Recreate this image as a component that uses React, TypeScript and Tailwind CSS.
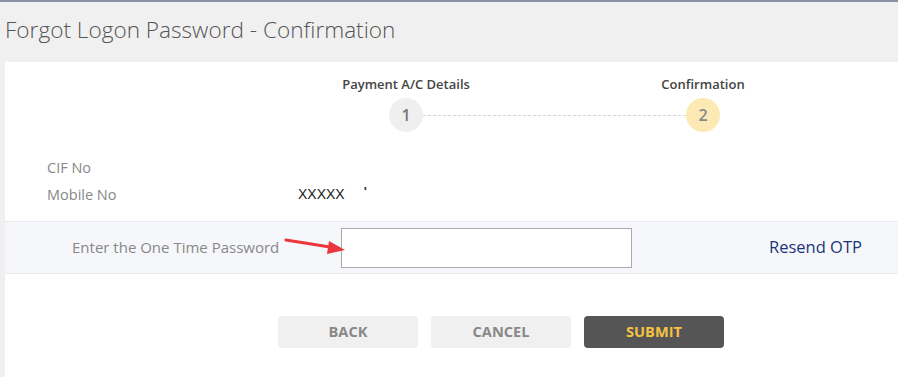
import { useState } from 'react'

function Step({ num, label, active }: { num: number; label: string; active?: boolean }) {
  return (
    <div className="flex w-[34px] flex-col items-center">
      <span className="whitespace-nowrap text-[13px] font-semibold leading-[18px] text-[#444]">
        {label}
      </span>
      <div
        className={
          active
            ? 'mt-[5px] flex h-[34px] w-[34px] items-center justify-center rounded-full bg-[#fde9b4] text-[16px] font-semibold text-[#888]'
            : 'mt-[5px] flex h-[34px] w-[34px] items-center justify-center rounded-full bg-[#efefef] text-[16px] font-semibold text-[#777]'
        }
      >
        {num}
      </div>
    </div>
  )
}

export default function App() {
  const [otp, setOtp] = useState('')

  return (
    <div className="flex h-[377px] w-full flex-col border-t-2 border-[#8a8fa5] bg-[#f0f0f0] font-['Open_Sans',sans-serif]">
      <div className="flex h-[60px] items-center pl-[5px]">
        <h1 className="-mt-[5px] text-[22.6px] font-light text-[#555]">Forgot Logon Password - Confirmation</h1>
      </div>

      <div className="ml-[5px] flex flex-1 flex-col bg-white">
        <div className="flex pl-[384px] pt-[13px]">
          <Step num={1} label="Payment A/C Details" />
          <div className="mt-[40px] w-[263px] border-t border-dashed border-[#d4d4d4]" />
          <Step num={2} label="Confirmation" active />
        </div>

        <div className="mt-[25px] flex flex-col gap-[6px] pl-[42px] text-[14.5px] text-[#888]">
          <div className="flex h-[21px] items-center">
            <span className="w-[251px]">CIF No</span>
          </div>
          <div className="flex h-[21px] items-center">
            <span className="w-[251px]">Mobile No</span>
            <span className="font-['Liberation_Sans',sans-serif] text-[14px] text-[#222]">XXXXX</span>
            <span className="ml-[19px] -mt-[6px] font-['Liberation_Sans',sans-serif] text-[13px] font-bold text-[#333]">'</span>
          </div>
        </div>

        <div className="relative mt-[16px] flex h-[53px] items-center border-y border-[#e9ebf0] bg-[#f6f7fa]">
          <span className="w-[336px] pl-[67px] text-[15px] text-[#888]">Enter the One Time Password</span>
          <input
            value={otp}
            onChange={(e) => setOtp(e.target.value)}
            className="h-[40px] w-[291px] border border-[#aaa] bg-white px-2 text-[14px] outline-none"
          />
          <a href="#" className="ml-[137px] text-[16.5px] text-[#1a347a]">
            Resend OTP
          </a>
          <svg
            className="absolute left-[278px] top-[14px]"
            width="66"
            height="20"
            viewBox="0 0 66 20"
          >
            <line x1="3" y1="4" x2="50" y2="11.5" stroke="#e8383d" strokeWidth="3.2" strokeLinecap="round" />
            <polygon points="62,14 46,5 44,18" fill="#e8383d" />
          </svg>
        </div>

        <div className="mt-[42px] flex gap-[13px] pl-[273px]">
          <button className="h-[32px] w-[140px] rounded-[4px] bg-[#f0f0f0] text-[14.6px] font-bold text-[#888]">BACK</button>
          <button className="h-[32px] w-[140px] rounded-[4px] bg-[#f0f0f0] text-[14.6px] font-bold text-[#888]">CANCEL</button>
          <button className="h-[32px] w-[140px] rounded-[4px] bg-[#555] text-[14.6px] font-bold text-[#f6c244]">SUBMIT</button>
        </div>
      </div>
    </div>
  )
}
